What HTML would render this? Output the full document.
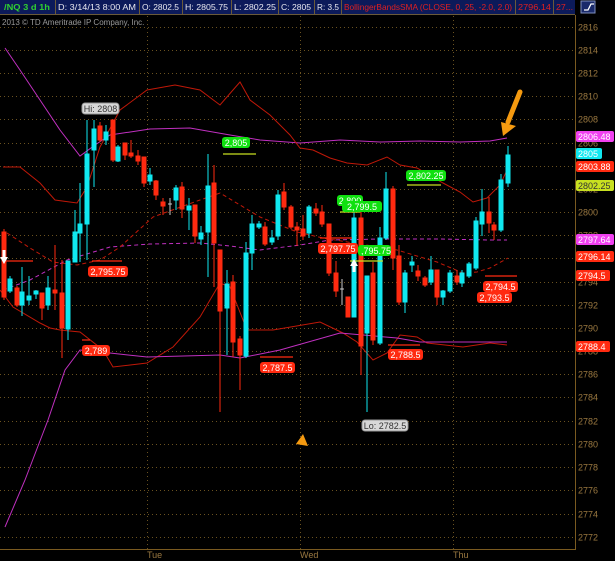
<!DOCTYPE html>
<html><head><meta charset="utf-8"><style>
html,body{margin:0;padding:0;background:#000;width:615px;height:561px;overflow:hidden}
svg{display:block}
text{font-family:"Liberation Sans",sans-serif}
</style></head><body>
<svg width="615" height="561" viewBox="0 0 615 561" xmlns="http://www.w3.org/2000/svg">
<rect width="615" height="561" fill="#000"/>
<!-- header -->
<rect x="0" y="0" width="575" height="14" fill="#0c1a5a"/>
<g stroke="#6a5a3a" stroke-width="1">
<line x1="55.5" y1="0" x2="55.5" y2="14"/><line x1="139.5" y1="0" x2="139.5" y2="14"/><line x1="182.5" y1="0" x2="182.5" y2="14"/><line x1="231.5" y1="0" x2="231.5" y2="14"/><line x1="278.5" y1="0" x2="278.5" y2="14"/><line x1="314.5" y1="0" x2="314.5" y2="14"/><line x1="341.5" y1="0" x2="341.5" y2="14"/><line x1="515.5" y1="0" x2="515.5" y2="14"/><line x1="553.5" y1="0" x2="553.5" y2="14"/><line x1="0" y1="14.5" x2="575" y2="14.5"/>
</g>
<g font-size="8.5" fill="#e8e8f0" lengthAdjust="spacingAndGlyphs">
<text x="4" y="10" fill="#30d030" font-weight="bold" textLength="46" lengthAdjust="spacingAndGlyphs">/NQ 3 d 1h</text>
<text x="58" y="10" textLength="78" lengthAdjust="spacingAndGlyphs">D: 3/14/13 8:00 AM</text>
<text x="142" y="10" textLength="37" lengthAdjust="spacingAndGlyphs">O: 2802.5</text>
<text x="185" y="10" textLength="43" lengthAdjust="spacingAndGlyphs">H: 2805.75</text>
<text x="234" y="10" textLength="42" lengthAdjust="spacingAndGlyphs">L: 2802.25</text>
<text x="281" y="10" textLength="30" lengthAdjust="spacingAndGlyphs">C: 2805</text>
<text x="317" y="10" textLength="22" lengthAdjust="spacingAndGlyphs">R: 3.5</text>
<text x="344" y="10" fill="#e02020" textLength="168" lengthAdjust="spacingAndGlyphs">BollingerBandsSMA (CLOSE, 0, 25, -2.0, 2.0)</text>
<text x="518" y="10" fill="#e02020" textLength="33" lengthAdjust="spacingAndGlyphs">2796.14</text>
<text x="556" y="10" fill="#e02020" textLength="17" lengthAdjust="spacingAndGlyphs">27...</text>
</g>
<rect x="581" y="1" width="14" height="12" fill="#1a2a6a" stroke="#8090c0"/>
<path d="M584 10 L588 10 L591 4 L594 4" stroke="#fff" fill="none" stroke-width="1.3"/>
<text x="2" y="25" font-size="8" fill="#9a9a9a">2013 © TD Ameritrade IP Company, Inc.</text>
<!-- grid -->
<g stroke="#6a5220" stroke-width="1" stroke-dasharray="1,3">
<line x1="0" y1="27.5" x2="575" y2="27.5"/><line x1="0" y1="50.5" x2="575" y2="50.5"/><line x1="0" y1="73.5" x2="575" y2="73.5"/><line x1="0" y1="96.5" x2="575" y2="96.5"/><line x1="0" y1="119.5" x2="575" y2="119.5"/><line x1="0" y1="143.5" x2="575" y2="143.5"/><line x1="0" y1="166.5" x2="575" y2="166.5"/><line x1="0" y1="189.5" x2="575" y2="189.5"/><line x1="0" y1="212.5" x2="575" y2="212.5"/><line x1="0" y1="235.5" x2="575" y2="235.5"/><line x1="0" y1="258.5" x2="575" y2="258.5"/><line x1="0" y1="282.5" x2="575" y2="282.5"/><line x1="0" y1="305.5" x2="575" y2="305.5"/><line x1="0" y1="328.5" x2="575" y2="328.5"/><line x1="0" y1="351.5" x2="575" y2="351.5"/><line x1="0" y1="374.5" x2="575" y2="374.5"/><line x1="0" y1="397.5" x2="575" y2="397.5"/><line x1="0" y1="421.5" x2="575" y2="421.5"/><line x1="0" y1="444.5" x2="575" y2="444.5"/><line x1="0" y1="467.5" x2="575" y2="467.5"/><line x1="0" y1="490.5" x2="575" y2="490.5"/><line x1="0" y1="514.5" x2="575" y2="514.5"/><line x1="0" y1="537.5" x2="575" y2="537.5"/>
<line x1="147.5" y1="16" x2="147.5" y2="549"/><line x1="300.5" y1="16" x2="300.5" y2="549"/><line x1="453.5" y1="16" x2="453.5" y2="549"/>
</g>
<g stroke="#7a5a20" stroke-width="1">
<line x1="575.5" y1="15" x2="575.5" y2="549"/><line x1="0" y1="549.5" x2="576" y2="549.5"/>
</g>
<g font-size="9" fill="#9a7840">
<text x="578" y="30.5">2816</text><text x="578" y="53.5">2814</text><text x="578" y="76.5">2812</text><text x="578" y="99.5">2810</text><text x="578" y="122.5">2808</text><text x="578" y="146.5">2806</text><text x="578" y="169.5">2804</text><text x="578" y="192.5">2802</text><text x="578" y="215.5">2800</text><text x="578" y="238.5">2798</text><text x="578" y="261.5">2796</text><text x="578" y="285.5">2794</text><text x="578" y="308.5">2792</text><text x="578" y="331.5">2790</text><text x="578" y="354.5">2788</text><text x="578" y="377.5">2786</text><text x="578" y="400.5">2784</text><text x="578" y="424.5">2782</text><text x="578" y="447.5">2780</text><text x="578" y="470.5">2778</text><text x="578" y="493.5">2776</text><text x="578" y="517.5">2774</text><text x="578" y="540.5">2772</text>
<text x="147" y="558">Tue</text><text x="300" y="558">Wed</text><text x="453" y="558">Thu</text>
</g>
<!-- bands -->
<g fill="none" stroke-width="1">
<polyline stroke="#c030c0" points="5,48 20,70 40,100 60,130 80,156 95,145 110,135 150,129 190,128 230,135 260,140 300,143 340,140 380,142 420,141 460,142 490,141 507,138"/>
<polyline stroke="#c01808" points="3,167 20,167 40,183 55,200 77,203 87,187 100,147 120,110 147,90 175,85 200,90 220,105 233,90 240,82 250,100 270,115 290,135 300,148 313,150 330,158 347,163 367,165 387,157 400,165 417,168 443,183 460,192 473,202 487,198 500,185 508,168"/>
<polyline stroke="#c030c0" stroke-dasharray="4,3" points="3,290 30,280 67,260 110,247 150,244 200,243 230,246 260,250 300,245 330,240 380,239 440,239 490,240 507,240"/>
<polyline stroke="#c01808" stroke-dasharray="4,3" points="7,233 30,248 53,262 77,265 100,260 120,247 153,217 200,200 220,193 240,205 260,217 297,232 323,238 360,244 397,250 437,262 463,273 477,272 490,268 508,258"/>
<polyline stroke="#c01808" points="0,290 13,307 40,323 50,328 60,330 80,332 103,350 113,367 147,363 173,347 200,317 220,283 230,287 247,330 273,330 320,322 343,333 357,342 373,360 387,353 400,335 417,337 427,343 463,347 490,343 507,345"/>
<polyline stroke="#c030c0" points="5,527 25,480 48,420 65,370 80,350 110,353 147,357 220,355 240,358 280,350 340,333 363,335 397,338 420,342 490,342 507,342"/>
</g>
<!-- candles -->
<g stroke-width="1">
<g stroke="#ff2a10" fill="#ff2a10">
<line x1="4" y1="229" x2="4" y2="300"/><rect x="2" y="232" width="4" height="65"/>
<line x1="17" y1="286" x2="17" y2="307"/><rect x="15" y="288" width="4" height="17"/>
<line x1="42" y1="293" x2="42" y2="320"/><rect x="40" y="293" width="4" height="15"/>
<line x1="55" y1="245" x2="55" y2="310"/><rect x="53" y="290" width="4" height="3"/>
<line x1="62" y1="260" x2="62" y2="358"/><rect x="60" y="293" width="4" height="35"/>
<line x1="100" y1="122" x2="100" y2="142"/><rect x="98" y="126" width="4" height="14"/>
<line x1="113" y1="120" x2="113" y2="162"/><rect x="111" y="120" width="4" height="40"/>
<line x1="125" y1="143" x2="125" y2="160"/><rect x="123" y="143" width="4" height="12"/>
<line x1="131" y1="140" x2="131" y2="158"/><rect x="129" y="153" width="4" height="3"/>
<line x1="138" y1="150" x2="138" y2="165"/><rect x="136" y="156" width="4" height="5"/>
<line x1="144" y1="157" x2="144" y2="187"/><rect x="142" y="157" width="4" height="26"/>
<line x1="156" y1="180" x2="156" y2="200"/><rect x="154" y="181" width="4" height="14"/>
<line x1="163" y1="198" x2="163" y2="215"/><rect x="161" y="202" width="4" height="4"/>
<line x1="182" y1="182" x2="182" y2="218"/><rect x="180" y="187" width="4" height="22"/>
<line x1="195" y1="205" x2="195" y2="243"/><rect x="193" y="205" width="4" height="31"/>
<line x1="214" y1="165" x2="214" y2="287"/><rect x="212" y="183" width="4" height="60"/>
<line x1="220" y1="250" x2="220" y2="412"/><rect x="218" y="250" width="4" height="61"/>
<line x1="233" y1="275" x2="233" y2="357"/><rect x="231" y="282" width="4" height="60"/>
<line x1="240" y1="336" x2="240" y2="390"/><rect x="238" y="339" width="4" height="16"/>
<line x1="265" y1="222" x2="265" y2="246"/><rect x="263" y="227" width="4" height="17"/>
<line x1="284" y1="183" x2="284" y2="210"/><rect x="282" y="192" width="4" height="15"/>
<line x1="291" y1="205" x2="291" y2="229"/><rect x="289" y="207" width="4" height="20"/>
<line x1="297" y1="222" x2="297" y2="246"/><rect x="295" y="227" width="4" height="3"/>
<line x1="303" y1="215" x2="303" y2="240"/><rect x="301" y="229" width="4" height="7"/>
<line x1="316" y1="203" x2="316" y2="216"/><rect x="314" y="209" width="4" height="4"/>
<line x1="322" y1="205" x2="322" y2="227"/><rect x="320" y="212" width="4" height="12"/>
<line x1="329" y1="224" x2="329" y2="276"/><rect x="327" y="224" width="4" height="49"/>
<line x1="336" y1="261" x2="336" y2="297"/><rect x="334" y="273" width="4" height="18"/>
<line x1="348" y1="297" x2="348" y2="317"/><rect x="346" y="297" width="4" height="20"/>
<line x1="361" y1="200" x2="361" y2="375"/><rect x="359" y="218" width="4" height="128"/>
<line x1="373" y1="262" x2="373" y2="345"/><rect x="371" y="273" width="4" height="67"/>
<line x1="393" y1="186" x2="393" y2="270"/><rect x="391" y="189" width="4" height="69"/>
<line x1="399" y1="245" x2="399" y2="305"/><rect x="397" y="256" width="4" height="46"/>
<line x1="418" y1="265" x2="418" y2="281"/><rect x="416" y="271" width="4" height="5"/>
<line x1="425" y1="276" x2="425" y2="287"/><rect x="423" y="278" width="4" height="7"/>
<line x1="437" y1="270" x2="437" y2="305"/><rect x="435" y="270" width="4" height="27"/>
<line x1="457" y1="270" x2="457" y2="285"/><rect x="455" y="276" width="4" height="6"/>
<line x1="489" y1="197" x2="489" y2="233"/><rect x="487" y="212" width="4" height="11"/>
<line x1="494" y1="222" x2="494" y2="240"/><rect x="492" y="225" width="4" height="5"/>
</g>
<g stroke="#10e8f0" fill="#10e8f0">
<line x1="10" y1="276" x2="10" y2="293"/><rect x="8" y="279" width="4" height="12"/>
<line x1="22" y1="267" x2="22" y2="316"/><rect x="20" y="292" width="4" height="13"/>
<line x1="29" y1="276" x2="29" y2="305"/><rect x="27" y="296" width="4" height="4"/>
<line x1="36" y1="290" x2="36" y2="299"/><rect x="34" y="291" width="4" height="3"/>
<line x1="48" y1="276" x2="48" y2="310"/><rect x="46" y="288" width="4" height="17"/>
<line x1="68" y1="261" x2="68" y2="340"/><rect x="66" y="261" width="4" height="68"/>
<line x1="75" y1="210" x2="75" y2="262"/><rect x="73" y="232" width="4" height="30"/>
<line x1="80" y1="183" x2="80" y2="262"/><rect x="78" y="224" width="4" height="9"/>
<line x1="87" y1="120" x2="87" y2="260"/><rect x="85" y="154" width="4" height="70"/>
<line x1="94" y1="120" x2="94" y2="187"/><rect x="92" y="129" width="4" height="21"/>
<line x1="106" y1="125" x2="106" y2="145"/><rect x="104" y="132" width="4" height="8"/>
<line x1="118" y1="145" x2="118" y2="162"/><rect x="116" y="147" width="4" height="14"/>
<line x1="150" y1="168" x2="150" y2="185"/><rect x="148" y="175" width="4" height="6"/>
<line x1="176" y1="185" x2="176" y2="210"/><rect x="174" y="188" width="4" height="12"/>
<line x1="189" y1="198" x2="189" y2="230"/><rect x="187" y="206" width="4" height="4"/>
<line x1="201" y1="226" x2="201" y2="245"/><rect x="199" y="233" width="4" height="6"/>
<line x1="208" y1="154" x2="208" y2="277"/><rect x="206" y="186" width="4" height="46"/>
<line x1="227" y1="270" x2="227" y2="355"/><rect x="225" y="284" width="4" height="24"/>
<line x1="246" y1="242" x2="246" y2="358"/><rect x="244" y="253" width="4" height="103"/>
<line x1="252" y1="215" x2="252" y2="270"/><rect x="250" y="224" width="4" height="29"/>
<line x1="259" y1="221" x2="259" y2="229"/><rect x="257" y="224" width="4" height="3"/>
<line x1="272" y1="230" x2="272" y2="245"/><rect x="270" y="238" width="4" height="4"/>
<line x1="278" y1="190" x2="278" y2="240"/><rect x="276" y="195" width="4" height="41"/>
<line x1="309" y1="205" x2="309" y2="238"/><rect x="307" y="207" width="4" height="26"/>
<line x1="354" y1="210" x2="354" y2="317"/><rect x="352" y="218" width="4" height="99"/>
<line x1="367" y1="276" x2="367" y2="412"/><rect x="365" y="276" width="4" height="57"/>
<line x1="380" y1="227" x2="380" y2="345"/><rect x="378" y="238" width="4" height="105"/>
<line x1="386" y1="172" x2="386" y2="240"/><rect x="384" y="189" width="4" height="49"/>
<line x1="405" y1="270" x2="405" y2="313"/><rect x="403" y="273" width="4" height="29"/>
<line x1="412" y1="256" x2="412" y2="272"/><rect x="410" y="262" width="4" height="3"/>
<line x1="431" y1="256" x2="431" y2="285"/><rect x="429" y="270" width="4" height="12"/>
<line x1="443" y1="290" x2="443" y2="305"/><rect x="441" y="291" width="4" height="6"/>
<line x1="450" y1="270" x2="450" y2="293"/><rect x="448" y="273" width="4" height="18"/>
<line x1="462" y1="270" x2="462" y2="287"/><rect x="460" y="273" width="4" height="10"/>
<line x1="469" y1="262" x2="469" y2="278"/><rect x="467" y="264" width="4" height="12"/>
<line x1="476" y1="217" x2="476" y2="270"/><rect x="474" y="221" width="4" height="47"/>
<line x1="482" y1="189" x2="482" y2="236"/><rect x="480" y="212" width="4" height="12"/>
<line x1="501" y1="174" x2="501" y2="232"/><rect x="499" y="180" width="4" height="50"/>
<line x1="508" y1="146" x2="508" y2="187"/><rect x="506" y="155" width="4" height="28"/>
</g>
<g stroke="#c8c8c8"><line x1="170" y1="198" x2="170" y2="215"/><line x1="168" y1="204" x2="172" y2="204"/><line x1="342" y1="279" x2="342" y2="305"/><line x1="340" y1="289" x2="344" y2="289"/></g>
</g>
<!-- level lines -->
<g stroke-width="1.2">
<line x1="223" y1="154" x2="256" y2="154" stroke="#c8e020"/>
<line x1="407" y1="185" x2="441" y2="185" stroke="#c8e020"/>
<line x1="340" y1="212" x2="360" y2="212" stroke="#c8e020"/>
<line x1="350" y1="261" x2="383" y2="261" stroke="#c8e020"/>
<line x1="92" y1="261" x2="122" y2="261" stroke="#ff2a10"/>
<line x1="5" y1="261" x2="33" y2="261" stroke="#ff2a10"/>
<line x1="320" y1="238" x2="352" y2="238" stroke="#ff2a10"/>
<line x1="260" y1="357" x2="293" y2="357" stroke="#ff2a10"/>
<line x1="388" y1="345" x2="420" y2="345" stroke="#ff2a10"/>
<line x1="485" y1="276" x2="517" y2="276" stroke="#ff2a10"/>
<line x1="82" y1="340" x2="90" y2="340" stroke="#ff2a10"/>
</g>
<!-- bubble labels -->
<g font-size="9" text-anchor="middle">
<rect x="82" y="103" width="37" height="11" rx="3" fill="#d8d8d8" stroke="#999"/><text x="100.5" y="112" fill="#333">Hi: 2808</text>
<rect x="362" y="420" width="46" height="11" rx="3" fill="#d8d8d8" stroke="#999"/><text x="385" y="429" fill="#333">Lo: 2782.5</text>
<rect x="222" y="137" width="28" height="11" rx="3" fill="#10e010"/><text x="236" y="146" fill="#fff">2,805</text>
<rect x="406" y="170" width="40" height="11" rx="3" fill="#10e010"/><text x="426" y="179" fill="#fff">2,802.25</text>
<rect x="337" y="195" width="26" height="11" rx="3" fill="#10e010"/><text x="350" y="204" fill="#fff">2,800</text>
<rect x="342" y="201" width="40" height="11" rx="3" fill="#10e010"/><text x="362" y="210" fill="#fff">2,799.5</text>
<rect x="358" y="245" width="33" height="11" rx="3" fill="#10e010"/><text x="376" y="254" fill="#fff">,795.75</text>
<rect x="88" y="266" width="40" height="11" rx="3" fill="#ff2a10"/><text x="108" y="275" fill="#fff">2,795.75</text>
<rect x="82" y="345" width="28" height="11" rx="3" fill="#ff2a10"/><text x="96" y="354" fill="#fff">2,789</text>
<rect x="260" y="362" width="35" height="11" rx="3" fill="#ff2a10"/><text x="277.5" y="371" fill="#fff">2,787.5</text>
<rect x="318" y="243" width="40" height="11" rx="3" fill="#ff2a10"/><text x="338" y="252" fill="#fff">2,797.75</text>
<rect x="388" y="349" width="35" height="11" rx="3" fill="#ff2a10"/><text x="405.5" y="358" fill="#fff">2,788.5</text>
<rect x="483" y="281" width="35" height="11" rx="3" fill="#ff2a10"/><text x="500.5" y="290" fill="#fff">2,794.5</text>
<rect x="477" y="292" width="35" height="11" rx="3" fill="#ff2a10"/><text x="494.5" y="301" fill="#fff">2,793.5</text>
</g>
<!-- right price tags -->
<g font-size="9">
<rect x="576" y="131" width="38" height="11" rx="2" fill="#f040f0"/><text x="578" y="140" fill="#fff">2806.48</text>
<rect x="576" y="148" width="26" height="11" rx="2" fill="#10e8f0"/><text x="578" y="157" fill="#fff">2805</text>
<rect x="576" y="161" width="38" height="11" rx="2" fill="#ff2a10"/><text x="578" y="170" fill="#fff">2803.88</text>
<rect x="576" y="180" width="38" height="11" rx="2" fill="#c8e020"/><text x="578" y="189" fill="#333">2802.25</text>
<rect x="576" y="234" width="38" height="11" rx="2" fill="#f040f0"/><text x="578" y="243" fill="#fff">2797.64</text>
<rect x="576" y="251" width="38" height="11" rx="2" fill="#ff2a10"/><text x="578" y="260" fill="#fff">2796.14</text>
<rect x="576" y="270" width="34" height="11" rx="2" fill="#ff2a10"/><text x="578" y="279" fill="#fff">2794.5</text>
<rect x="576" y="341" width="34" height="11" rx="2" fill="#ff2a10"/><text x="578" y="350" fill="#fff">2788.4</text>
</g>
<!-- arrows -->
<path d="M520 92 L508 122" stroke="#f59a10" stroke-width="5" stroke-linecap="round"/>
<path d="M501 122 L516 126 L503 136 Z" fill="#f59a10"/>
<path d="M296 444 L308 446 L303 434 Z" fill="#f59a10"/>
<path d="M4 264 L0 257 L2.5 257 L2.5 250 L5.5 250 L5.5 257 L8 257 Z" fill="#fff"/>
<path d="M354 259 L350 266 L352.5 266 L352.5 272 L355.5 272 L355.5 266 L358 266 Z" fill="#fff"/>
</svg>
</body></html>
